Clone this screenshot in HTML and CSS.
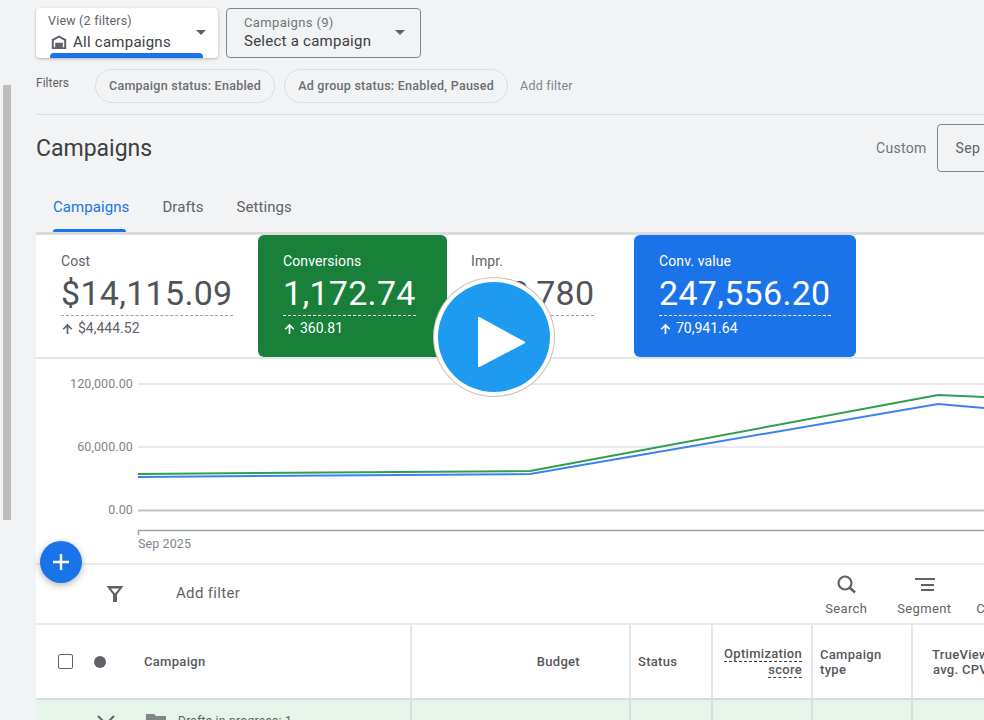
FILE: index.html
```html
<!DOCTYPE html>
<html lang="en">
<head>
<meta charset="utf-8">
<title>Campaigns</title>
<link rel="stylesheet" href="styles.css">
</head>
<body>
<div class="page">
  <div class="rail"><div class="thumb"></div></div>
  <main class="main">
    <div class="selectors">
      <div class="picker picker-view">
        <div class="picker-text">
          <div class="picker-label">View (2 filters)</div>
          <div class="picker-value">
            <svg class="home" viewBox="0 0 18 18"><path d="M9 2.500 1.800 6.300V16H16.200V6.300Z M3.800 7.400 9 4.700 14.200 7.400V14.200H12.800V9.800H5.200V14.200H3.800Z" fill="#5f6368" fill-rule="evenodd"/></svg>
            All campaigns
          </div>
        </div>
        <span class="caret"></span>
        <span class="picker-bar"></span>
      </div>
      <div class="picker picker-campaign">
        <div class="picker-text">
          <div class="picker-label">Campaigns (9)</div>
          <div class="picker-value">Select a campaign</div>
        </div>
        <span class="caret"></span>
      </div>
    </div>

    <div class="filters">
      <span class="filters-label">Filters</span>
      <span class="chip">Campaign status: Enabled</span>
      <span class="chip">Ad group status: Enabled, Paused</span>
      <span class="add-filter">Add filter</span>
    </div>

    <div class="title-row">
      <h1>Campaigns</h1>
      <div class="range">
        <span class="range-label">Custom</span>
        <div class="range-box">Sep 1 – 30, 2025</div>
      </div>
    </div>

    <nav class="tabs">
      <span class="tab tab-active">Campaigns</span>
      <span class="tab">Drafts</span>
      <span class="tab">Settings</span>
    </nav>

    <section class="cards">
      <div class="card card-cost">
        <div class="card-label">Cost</div>
        <div class="card-num">$14,115.09</div>
        <div class="card-delta"><svg class="up" viewBox="0 0 12 12"><path d="M6 1.500 1.500 6.200 2.600 7.200 5.200 4.600V11H6.800V4.600L9.400 7.200 10.500 6.200Z"/></svg>$4,444.52</div>
      </div>
      <div class="card card-green">
        <div class="card-label">Conversions</div>
        <div class="card-num">1,172.74</div>
        <div class="card-delta"><svg class="up" viewBox="0 0 12 12"><path d="M6 1.500 1.500 6.200 2.600 7.200 5.200 4.600V11H6.800V4.600L9.400 7.200 10.500 6.200Z"/></svg>360.81</div>
      </div>
      <div class="card card-impr">
        <div class="card-label">Impr.</div>
        <div class="card-num">163,780</div>
        <div class="card-delta"></div>
      </div>
      <div class="card card-blue">
        <div class="card-label">Conv. value</div>
        <div class="card-num">247,556.20</div>
        <div class="card-delta"><svg class="up" viewBox="0 0 12 12"><path d="M6 1.500 1.500 6.200 2.600 7.200 5.200 4.600V11H6.800V4.600L9.400 7.200 10.500 6.200Z"/></svg>70,941.64</div>
      </div>
    </section>

    <section class="chart">
      <svg class="chart-svg" viewBox="0 0 948 204" width="948" height="204">
        <g class="grid">
          <line x1="102" y1="25" x2="948" y2="25"/>
          <line x1="102" y1="88" x2="948" y2="88"/>
        </g>
        <line class="zero" x1="102" y1="151.500" x2="948" y2="151.500"/>
        <text class="tick" x="97" y="29" text-anchor="end">120,000.00</text>
        <text class="tick" x="97" y="92" text-anchor="end">60,000.00</text>
        <text class="tick" x="97" y="155" text-anchor="end">0.00</text>
        <polyline class="green" points="102,115 494,112 902,36 948,38"/>
        <polyline class="blue" points="102,118 494,115 902,45 948,49"/>
        <path class="axis" d="M102.500 176V171.500H948"/>
        <text class="tick" x="102" y="189">Sep 2025</text>
      </svg>
    </section>

    <section class="toolbar">
      <svg class="funnel" viewBox="0 0 20 20"><path d="M1.500 2H18.500L12 10.500V18H8V10.500Z M5.800 4.600 10 9.600 14.200 4.600Z" fill="#5f6368" fill-rule="evenodd"/></svg>
      <span class="tool-add">Add filter</span>
      <div class="tools">
        <div class="tool">
          <svg viewBox="0 0 24 24"><circle cx="11" cy="11" r="6.500" fill="none" stroke="#5f6368" stroke-width="2.200"/><path d="M15.500 15.500 21 20.500" stroke="#5f6368" stroke-width="2.600" fill="none"/></svg>
          <span>Search</span>
        </div>
        <div class="tool">
          <svg viewBox="0 0 24 24"><path d="M3 7H23M9 13H22M9 18H22" stroke="#5f6368" stroke-width="1.800" fill="none"/></svg>
          <span>Segment</span>
        </div>
        <div class="tool tool-last">
          <svg viewBox="0 0 24 24"><path d="M4 4H9V20H4ZM10 4H15V20H10ZM16 4H20V20H16Z" fill="#5f6368"/></svg>
          <span>Columns</span>
        </div>
      </div>
    </section>

    <section class="table">
      <div class="row head">
        <div class="cell cell-name">
          <span class="check"></span>
          <span class="dot"></span>
          <span class="name">Campaign</span>
        </div>
        <div class="cell cell-right">Budget</div>
        <div class="cell">Status</div>
        <div class="cell cell-right cell-opt"><span class="dashed">Optimization</span><span class="dashed">score</span></div>
        <div class="cell">Campaign<br>type</div>
        <div class="cell cell-center">TrueView<br>avg. CPV</div>
      </div>
      <div class="row draft">
        <div class="cell cell-name">
          <svg class="chev" viewBox="0 0 20 12"><path d="M2 2 10 10 18 2" fill="none" stroke="#5f6368" stroke-width="2"/></svg>
          <svg class="folder" viewBox="0 0 24 20"><path d="M2 2H10L12 4H22V20H2Z" fill="#80868b"/></svg>
          <span class="draft-text">Drafts in progress: 1</span>
        </div>
        <div class="cell"></div>
        <div class="cell"></div>
        <div class="cell"></div>
        <div class="cell"></div>
        <div class="cell"></div>
      </div>
    </section>
  </main>

  <button class="fab" aria-label="Create">
    <svg viewBox="0 0 20 20"><path d="M10 2V18M2 10H18" stroke="#fff" stroke-width="2.400"/></svg>
  </button>
  <div class="play">
    <svg viewBox="0 0 60 60"><path d="M12 9 57 33.500 12 57Z" fill="#fff" stroke="#fff" stroke-width="2" stroke-linejoin="round"/></svg>
  </div>
</div>
</body>
</html>
```

FILE: styles.css
```css
* { box-sizing: border-box; }
html, body { margin: 0; padding: 0; }
body { font-family: Roboto, "Liberation Sans", sans-serif; color: #3c4043; background: #f1f3f4; }

.page { position: relative; display: flex; width: 984px; height: 720px; overflow: hidden; }
.rail { flex: 0 0 36px; padding: 85px 0 0 3px; }
.thumb { width: 8px; height: 435px; background: #bdbdbd; }
.main { flex: 0 0 948px; width: 948px; }

.selectors { display: flex; gap: 8px; padding-top: 8px; }
.picker { position: relative; display: flex; height: 50px; border-radius: 4px; overflow: hidden; }
.picker-view { width: 182px; padding: 5px 0 0 12px; background: #fff; box-shadow: 0 1px 3px rgba(60,64,67,.35); }
.picker-campaign { width: 195px; padding: 6px 0 0 17px; border: 1px solid #80868b; }
.picker-text { flex: 1; }
.picker-label { font-size: 12.500px; line-height: 16px; color: #5f6368; letter-spacing: .2px; }
.picker-campaign .picker-label { font-size: 13px; letter-spacing: .35px; color: #70757a; }
.picker-value { display: flex; align-items: center; gap: 5px; margin-top: 4px; font-size: 15px; line-height: 18px; color: #3c4043; letter-spacing: .25px; }
.picker-campaign .picker-value { margin-top: 1px; }
.home { width: 18px; height: 18px; margin-left: 2px; }
.caret { width: 0; height: 0; margin: 17px 12.500px 0 0; border-left: 5.500px solid transparent; border-right: 5.500px solid transparent; border-top: 5.500px solid #5f6368; }
.picker-campaign .caret { margin: 15px 15.500px 0 0; }
.picker-bar { position: absolute; left: 14px; bottom: 0; width: 153px; height: 5px; background: #1a73e8; border-radius: 4px 4px 0 0; }

.filters { display: flex; align-items: center; height: 57px; padding-bottom: 1px; border-bottom: 1px solid #dadce0; }
.filters-label { width: 59px; margin-top: -6px; font-size: 12px; color: #5f6368; }
.chip { display: flex; align-items: center; height: 34px; margin-right: 9px; padding: 0 13px; border: 1px solid #dadce0; border-radius: 17px; font-size: 12.500px; font-weight: 500; color: #6a6e72; letter-spacing: .26px; white-space: nowrap; }
.add-filter { margin-left: 3px; font-size: 12.500px; color: #80868b; letter-spacing: .2px; }

.title-row { display: flex; align-items: center; height: 66px; }
h1 { flex: 0 0 840px; margin: 0; font-size: 23px; font-weight: 400; color: #3c4043; }
.range { display: flex; flex: none; align-items: center; gap: 10px; }
.range-label { font-size: 14px; color: #70757a; letter-spacing: .3px; }
.range-box { flex: none; width: 160px; height: 48px; padding: 15px 0 0 18px; border: 1px solid #80868b; border-radius: 4px; font-size: 14px; letter-spacing: .4px; color: #5f6368; white-space: nowrap; }

.tabs { display: flex; gap: 33px; height: 54px; padding-left: 17px; border-bottom: 3px solid #dadce0; }
.tab { position: relative; padding-top: 17px; font-size: 15px; color: #5f6368; letter-spacing: .07px; }
.tab-active { color: #1a73e8; }
.tab-active::after { content: ""; position: absolute; left: 0; right: 3px; bottom: 0; height: 3px; background: #1a73e8; border-radius: 3px 3px 0 0; }

.cards { display: flex; height: 124px; background: #fff; border-bottom: 2px solid #e3e5e8; }
.card { height: 122px; padding: 18px 0 0 25px; color: #5f6368; background: #fff; }
.card-cost { width: 222px; border-radius: 8px; }
.card-green { width: 189px; background: #188038; color: #fff; border-radius: 6px; }
.card-impr { width: 187px; padding-left: 24px; }
.card-blue { width: 222px; background: #1a73e8; color: #fff; border-radius: 6px; }
.card-label { font-size: 14px; line-height: 17px; letter-spacing: .1px; }
.card-num { display: inline-block; margin-top: 3px; padding: 0 0 2px; font-size: 34px; line-height: 40px; letter-spacing: .3px; color: #505356; border-bottom: 1px dashed #9aa0a6; white-space: nowrap; }
.card-green .card-num, .card-blue .card-num { color: #fff; border-bottom-color: #fff; }
.card-delta { display: flex; align-items: center; gap: 4px; margin-top: 3px; font-size: 14px; line-height: 18px; }
.up { width: 13px; height: 13px; fill: currentColor; }

.chart { height: 204px; background: #fff; }
.chart-svg { display: block; }
.grid line { stroke: #e8eaed; stroke-width: 2; }
.zero { stroke: #bdc1c6; stroke-width: 2; }
.axis { fill: none; stroke: #9aa0a6; stroke-width: 1.500; }
.tick { font-family: Roboto, "Liberation Sans", sans-serif; font-size: 12.500px; fill: #80868b; letter-spacing: .1px; }
.green, .blue { fill: none; stroke-width: 2; }
.green { stroke: #2f9e4f; }
.blue { stroke: #3b82f0; }

.toolbar { display: flex; align-items: center; height: 62px; padding: 0 0 2px 69px; background: #fff; border-top: 2px solid #e8eaed; border-bottom: 2px solid #e8eaed; }
.funnel { flex: none; width: 20px; height: 20px; margin-top: 2px; }
.tool-add { flex: none; margin-left: 51px; font-size: 15px; color: #5f6368; letter-spacing: .33px; }
.tools { display: flex; flex: none; gap: 30px; margin: 2px 0 0 585px; }
.tool { display: flex; flex-direction: column; align-items: center; gap: 5px; font-size: 13px; color: #5f6368; letter-spacing: .35px; white-space: nowrap; }
.tool svg { width: 24px; height: 24px; }
.tool-last { margin-left: -5px; }

.table { background: #fff; }
.row { display: grid; grid-template-columns: 374px 219px 82px 100px 100px 120px; }
.head { height: 75px; border-bottom: 2px solid #dadce0; }
.cell { display: flex; align-items: center; padding: 0 7px; border-left: 2px solid #e3e5e8; font-size: 13px; font-weight: 500; color: #55585b; line-height: 15px; letter-spacing: .3px; }
.cell-name { border-left: 0; padding-left: 22px; }
.cell-right { justify-content: flex-end; padding-right: 49px; }
.cell-opt { flex-direction: column; align-items: flex-end; justify-content: center; padding-right: 9px; }
.cell-center { text-align: center; padding-left: 19px; }
.dashed { border-bottom: 1px dashed #3c4043; }
.check { width: 14.500px; height: 14.500px; border: 1.500px solid #5f6368; border-radius: 2px; }
.dot { width: 12px; height: 12px; margin-left: 21.500px; border-radius: 50%; background: #5f6368; }
.name { margin-left: 38px; }
.draft { height: 30px; background: #e6f4ea; }
.draft .cell { border-left-color: #d5e2dc; }
.draft .cell-name { border-left: 0; align-items: flex-start; padding: 14px 0 0 60px; font-weight: 400; font-size: 12px; color: #5f6368; }
.chev { flex: none; width: 20px; height: 12px; }
.folder { flex: none; width: 24px; height: 20px; margin: -2px 0 0 28px; }
.draft-text { margin-left: 10px; white-space: nowrap; }

.fab { position: absolute; left: 40px; top: 541px; display: flex; align-items: center; justify-content: center; width: 42px; height: 42px; padding: 0; border: 0; border-radius: 50%; background: #1a73e8; box-shadow: 0 2px 7px rgba(60,64,67,.4); }
.fab svg { width: 20px; height: 20px; }
.play { position: absolute; left: 434px; top: 278px; display: flex; align-items: center; justify-content: center; width: 120px; height: 118px; border-radius: 50%; background: #1e9bf0; border: 4px solid #fff; box-shadow: 0 0 0 1px #c9c2c0; }
.play svg { width: 60px; height: 60px; margin: 3px 0 0 6px; }
```
